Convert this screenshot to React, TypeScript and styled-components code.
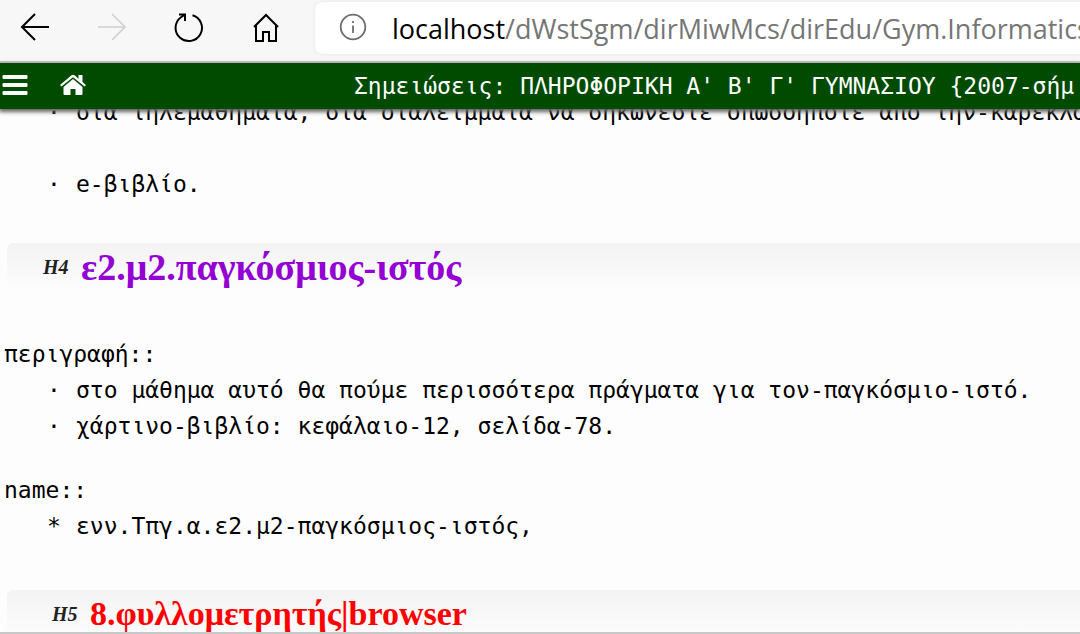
import React from "react";
import styled, { createGlobalStyle } from "styled-components";

const GlobalStyle = createGlobalStyle`
  * { box-sizing: border-box; }
  html, body { margin: 0; background: #fdfdfd; }
`;

const mono = `"DejaVu Sans Mono", "Liberation Mono", monospace`;

const Window = styled.div`
  display: flex;
  flex-direction: column;
  height: 100vh;
  overflow: hidden;
  border-bottom: 2px solid #c8c8c8;
  background: #fdfdfd;
  color: #000;
`;

const Toolbar = styled.header`
  display: flex;
  flex: none;
  align-items: flex-start;
  padding: 2px 0 7px 14px;
  background: #f7f7f7;
  border-bottom: 2px solid #cbc8cc;
`;

const ToolButton = styled.button<{ $gap: number }>`
  flex: none;
  width: 42px;
  height: 52px;
  margin: 0 ${(p) => p.$gap}px 0 0;
  padding: 0;
  border: 0;
  background: none;
  color: #000;
  &:disabled { color: #cfcfcf; }
  svg { display: block; margin: auto; }
`;

const AddressBar = styled.div`
  display: flex;
  flex: 1;
  min-width: 0;
  height: 52px;
  align-items: center;
  padding-left: 23px;
  gap: 24px;
  overflow: hidden;
  border-radius: 8px 0 0 8px;
  background: #fff;
  box-shadow: 0 0 4px #e6e6e6;
  svg { flex: none; }
`;

const Url = styled.a`
  font: 27px/40px "Open Sans", "Noto Sans", sans-serif;
  padding-top: 2px;
  color: #767676;
  text-decoration: none;
  white-space: nowrap;
`;

const Host = styled.span`
  color: #000;
`;

const SiteBar = styled.nav`
  position: relative;
  z-index: 1;
  display: flex;
  flex: none;
  align-items: center;
  height: 46px;
  padding-left: 2px;
  background: #004b00;
  color: #fff;
  box-shadow: 0 2px 4px 1px #666;
`;

const SiteButton = styled.button`
  width: 26px;
  height: 26px;
  margin: 0 32px 0 0;
  padding: 0;
  border: 0;
  background: none;
  color: inherit;
  svg { display: block; }
`;

const SiteTitle = styled.h1`
  flex: 1;
  min-width: 0;
  margin: 0;
  padding-left: 236px;
  overflow: hidden;
  font: 400 23px/36px ${mono};
  white-space: nowrap;
`;

const Content = styled.main`
  flex: 1;
  min-height: 0;
  margin-top: -15px;
  overflow: hidden;
  font: 23px/36px ${mono};
  white-space: nowrap;
`;

const Block = styled.section<{ $after: number }>`
  margin-bottom: ${(p) => p.$after}px;
  padding-left: 4px;
`;

const Line = styled.p`
  margin: 0;
`;

const List = styled.ul`
  margin: 0;
  padding: 0 0 0 43px;
  list-style: none;
`;

const Item = styled.li<{ $after?: number }>`
  display: grid;
  grid-template-columns: 29px auto;
  margin-bottom: ${(p) => p.$after ?? 0}px;
`;

const Heading = styled.h2<{ $color: string; $size: number; $indent: number; $after: number }>`
  display: flex;
  align-items: center;
  gap: 12px;
  height: 48px;
  margin: 0 0 ${(p) => p.$after}px 7px;
  padding-left: ${(p) => p.$indent}px;
  border-radius: 6px 0 0 0;
  background: linear-gradient(#f3f3f3, #fdfdfd);
  color: ${(p) => p.$color};
  font: 700 ${(p) => p.$size}px/48px "Liberation Serif", "DejaVu Serif", serif;
`;

const Level = styled.span`
  width: 26px;
  color: #222;
  font: italic 700 20px/48px "Liberation Serif", serif;
`;

const BackIcon = () => (
  <svg width="30" height="52" viewBox="0 0 30 52" fill="none" stroke="currentColor" strokeWidth="2">
    <path d="M29 25H2M15 12L2 25L15 38" />
  </svg>
);

const ForwardIcon = () => (
  <svg width="30" height="52" viewBox="0 0 30 52" fill="none" stroke="currentColor" strokeWidth="1.6">
    <path d="M1 25H28M15 12L28 25L15 38" />
  </svg>
);

const ReloadIcon = () => (
  <svg width="30" height="52" viewBox="0 0 30 52" fill="none" stroke="currentColor" strokeWidth="2">
    <path d="M18.5 13.2A13.2 13.2 0 1 1 7 15.2L11 12.5M5 12.5H11V19" />
  </svg>
);

const HomeIcon = () => (
  <svg width="26" height="52" viewBox="0 0 26 52" fill="none" stroke="currentColor" strokeWidth="2">
    <path d="M1 25L13 13L25 25M3 23.5V39H10V30H16V39H23V23.5" />
  </svg>
);

const InfoIcon = () => (
  <svg width="30" height="30" viewBox="0 0 30 30" fill="none" stroke="#6b6f6b" strokeWidth="1.8">
    <circle cx="15" cy="14" r="12.3" />
    <path d="M15 12.5V20M15 8V10" />
  </svg>
);

const MenuIcon = () => (
  <svg width="26" height="26" viewBox="0 0 26 26" fill="currentColor">
    <rect x="0.5" y="2" width="25" height="4" rx="1" />
    <rect x="0.5" y="10" width="25" height="4" rx="1" />
    <rect x="0.5" y="18" width="25" height="4" rx="1" />
  </svg>
);

const SiteHomeIcon = () => (
  <svg width="26" height="26" viewBox="0 0 26 26" fill="currentColor">
    <path d="M13 6L3.5 14V21Q3.5 22 4.5 22H10.5V16H15.5V22H21.5Q22.5 22 22.5 21V14Z" />
    <path d="M0 12L11.5 2.3Q13 1.2 14.5 2.3L18.5 5.7V2H22.5V9L26 12L24.6 13.5L13 4.3L1.4 13.5Z" />
  </svg>
);

export default function App() {
  return (
    <>
      <GlobalStyle />
      <Window>
        <Toolbar>
          <ToolButton $gap={35} aria-label="Back"><BackIcon /></ToolButton>
          <ToolButton $gap={35} aria-label="Forward" disabled><ForwardIcon /></ToolButton>
          <ToolButton $gap={35} aria-label="Reload"><ReloadIcon /></ToolButton>
          <ToolButton $gap={28} aria-label="Home"><HomeIcon /></ToolButton>
          <AddressBar>
            <InfoIcon />
            <Url href="#"><Host>localhost</Host>/dWstSgm/dirMiwMcs/dirEdu/Gym.Informatics</Url>
          </AddressBar>
        </Toolbar>
        <SiteBar>
          <SiteButton aria-label="Menu"><MenuIcon /></SiteButton>
          <SiteButton aria-label="Site home"><SiteHomeIcon /></SiteButton>
          <SiteTitle>Σημειώσεις: ΠΛΗΡΟΦΟΡΙΚΗ Α' Β' Γ' ΓΥΜΝΑΣΙΟΥ {"{"}2007-σήμ</SiteTitle>
        </SiteBar>
        <Content>
          <Block $after={41}>
            <List>
              <Item $after={36}><span>·</span><span>στα τηλεμαθήματα, στα διαλείμματα να σηκώνεστε οπωσδήποτε από την-καρέκλα</span></Item>
              <Item><span>·</span><span>e-βιβλίο.</span></Item>
            </List>
          </Block>
          <Heading $color="#9400d3" $size={38} $indent={36} $after={45}>
            <Level>H4</Level>ε2.μ2.παγκόσμιος-ιστός
          </Heading>
          <Block $after={28}>
            <Line>περιγραφή::</Line>
            <List>
              <Item><span>·</span><span>στο μάθημα αυτό θα πούμε περισσότερα πράγματα για τον-παγκόσμιο-ιστό.</span></Item>
              <Item><span>·</span><span>χάρτινο-βιβλίο: κεφάλαιο-12, σελίδα-78.</span></Item>
            </List>
          </Block>
          <Block $after={46}>
            <Line>name::</Line>
            <List>
              <Item><span>*</span><span>ενν.Τπγ.α.ε2.μ2-παγκόσμιος-ιστός,</span></Item>
            </List>
          </Block>
          <Heading $color="#ff0000" $size={34} $indent={45} $after={0}>
            <Level>H5</Level>8.φυλλομετρητής|browser
          </Heading>
        </Content>
      </Window>
    </>
  );
}
